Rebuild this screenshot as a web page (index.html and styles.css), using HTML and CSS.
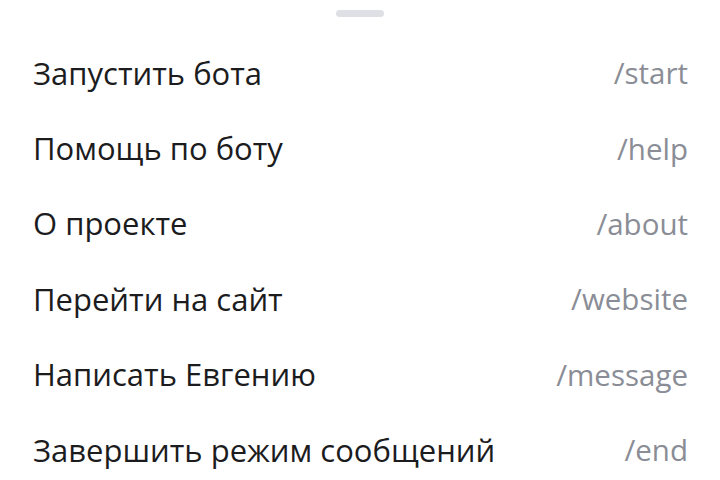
FILE: index.html
```html
<!DOCTYPE html>
<html lang="ru">
<head>
<meta charset="utf-8">
<link rel="stylesheet" href="styles.css">
</head>
<body>
<div class="sheet">
  <div class="grabber"></div>
  <ul class="commands">
    <li class="command"><span class="label">Запустить бота</span><span class="cmd">/start</span></li>
    <li class="command"><span class="label">Помощь по боту</span><span class="cmd">/help</span></li>
    <li class="command"><span class="label">О проекте</span><span class="cmd">/about</span></li>
    <li class="command"><span class="label">Перейти на сайт</span><span class="cmd">/website</span></li>
    <li class="command"><span class="label">Написать Евгению</span><span class="cmd">/message</span></li>
    <li class="command"><span class="label">Завершить режим сообщений</span><span class="cmd">/end</span></li>
  </ul>
</div>
</body>
</html>
```

FILE: styles.css
```css
html, body {
  margin: 0;
  padding: 0;
  background: #ffffff;
}

.sheet {
  width: 720px;
  height: 480px;
  overflow: hidden;
  font-family: "Open Sans", "Noto Sans", sans-serif;
}

.grabber {
  width: 48px;
  height: 7px;
  border-radius: 4px;
  background: #dfe0e5;
  margin: 10px auto 0;
}

.commands {
  list-style: none;
  margin: 18px 0 0;
  padding: 0 32px 0 33px;
}

.command {
  display: flex;
  justify-content: space-between;
  align-items: center;
  height: 75.4px;
}

.label {
  font-size: 31px;
  color: #1c1c1e;
}

.cmd {
  font-size: 29.5px;
  color: #8a8d96;
}
```
